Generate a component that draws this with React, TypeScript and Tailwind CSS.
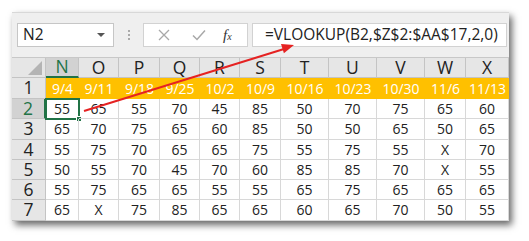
import React from 'react';

const cols = ['N', 'O', 'P', 'Q', 'R', 'S', 'T', 'U', 'V', 'W', 'X'];
const dates = ['9/4', '9/11', '9/18', '9/25', '10/2', '10/9', '10/16', '10/23', '10/30', '11/6', '11/13'];
const rows = [
  ['55', '65', '55', '70', '45', '85', '50', '70', '75', '65', '60'],
  ['65', '70', '75', '65', '60', '85', '50', '50', '65', '50', '65'],
  ['55', '75', '70', '65', '65', '75', '55', '75', '55', 'X', '70'],
  ['50', '55', '70', '45', '70', '60', '85', '85', '70', 'X', '55'],
  ['55', '75', '65', '65', '55', '55', '65', '75', '65', '65', '65'],
  ['65', 'X', '75', '85', '65', '65', '60', '65', '70', '50', '55'],
];

const font = { fontFamily: '"Open Sans", "Noto Sans", sans-serif' };

export default function App() {
  return (
    <div className="relative w-[529px] h-[241px] bg-white overflow-hidden" style={font}>
      <div className="ml-[12px] mt-[12px] w-[497px] h-[209px] bg-[#efefef] border-t border-[#d8d8d8] shadow-[3px_4px_7px_rgba(0,0,0,0.6)] flex flex-col">
        {/* formula bar */}
        <div className="h-[45px] flex items-start pt-[10px] pl-[5px]">
          <div className="w-[97px] h-[24px] bg-white border border-[#c6c6c6] flex items-center justify-between pl-[5px] pr-[8px]">
            <span className="text-[15.5px] text-[#222] leading-none">N2</span>
            <span className="w-0 h-0 border-l-[4px] border-r-[4px] border-t-[4px] border-l-transparent border-r-transparent border-t-[#555]" />
          </div>
          <div className="w-[29px] h-[24px] flex flex-col items-center justify-center gap-[2px]">
            <span className="w-[2px] h-[2px] bg-[#aaa]" />
            <span className="w-[2px] h-[2px] bg-[#aaa]" />
            <span className="w-[2px] h-[2px] bg-[#aaa]" />
          </div>
          <div className="w-[105px] h-[24px] bg-white border border-[#d2d2d2] flex items-center pl-[12px]">
            <svg width="14" height="14" viewBox="0 0 14 14" className="ml-[1px]">
              <path d="M2 2 L12 12 M12 2 L2 12" stroke="#a8a8a8" strokeWidth="1.3" fill="none" />
            </svg>
            <svg width="16" height="14" viewBox="0 0 16 14" className="ml-[20px]">
              <path d="M2 7.5 L6 11.5 L14 2.5" stroke="#a8a8a8" strokeWidth="1.5" fill="none" />
            </svg>
            <span className="ml-[16px] text-[#333] italic leading-none" style={{ fontFamily: '"Liberation Serif", serif' }}>
              <span className="text-[15px]">f</span>
              <span className="text-[10px]">x</span>
            </span>
          </div>
          <div className="ml-[4px] w-[255px] h-[24px] bg-white border border-[#d2d2d2] flex items-center pl-[12px]">
            <span className="text-[15.5px] text-[#222] leading-none whitespace-nowrap">=VLOOKUP(B2,$Z$2:$AA$17,2,0)</span>
          </div>
        </div>

        {/* sheet */}
        <div className="grid grid-cols-[34px_33px_40px_41px_40px_40px_41px_48px_48px_48px_41px_43px] grid-rows-[20px_21px_20px_21px_20px_20px_20px_21px] border-t border-[#c8c8c8] bg-white">
          <div className="relative bg-[#e6e6e6] border-r border-b border-[#c4c4c4]">
            <svg width="14" height="14" viewBox="0 0 14 14" className="absolute right-[3px] bottom-[2px]">
              <polygon points="14,0 14,14 0,14" fill="#b4b4b4" />
            </svg>
          </div>
          {cols.map((c) => (
            <div
              key={c}
              className={`flex items-center justify-center text-[17.5px] leading-none border-r border-[#c4c4c4] ${
                c === 'N' ? 'bg-[#d2d2d2] text-[#217346] border-b-2 border-b-[#217346]' : 'bg-[#e6e6e6] text-[#222] border-b border-b-[#c4c4c4]'
              }`}
            >
              {c}
            </div>
          ))}

          <div className="flex items-center justify-center bg-[#e6e6e6] border-r border-b border-[#c4c4c4] text-[17.5px] text-[#222] leading-none">1</div>
          {dates.map((d) => (
            <div key={d} className="flex items-center justify-center bg-[#ffc000] text-white text-[14px] leading-none">
              {d}
            </div>
          ))}

          {rows.map((r, i) => (
            <React.Fragment key={i}>
              <div
                className={`flex items-center justify-center text-[17.5px] leading-none border-b border-[#c4c4c4] ${
                  i === 0 ? 'bg-[#d2d2d2] text-[#217346] border-r-2 border-r-[#217346]' : 'bg-[#e6e6e6] text-[#222] border-r border-r-[#c4c4c4]'
                }`}
              >
                {i + 2}
              </div>
              {r.map((v, j) => (
                <div key={j} className="relative flex items-center justify-center border-r border-b border-[#d8d8d8] text-[14px] text-[#222] leading-none">
                  {v}
                  {i === 0 && j === 0 && (
                    <>
                      <span className="absolute -left-[1px] -top-[1px] w-[35px] h-[22px] border-2 border-[#217346]" />
                      <span className="absolute -right-[4px] -bottom-[4px] w-[6px] h-[6px] bg-[#217346] border border-white" />
                    </>
                  )}
                </div>
              ))}
            </React.Fragment>
          ))}
        </div>
      </div>

      {/* red arrow */}
      <svg className="absolute left-0 top-0 pointer-events-none" width="529" height="241" viewBox="0 0 529 241">
        <line x1="84" y1="111" x2="284" y2="49" stroke="#e52222" strokeWidth="2" />
        <polygon points="294,45 283.9,53.2 281,44" fill="#e52222" />
      </svg>
    </div>
  );
}
